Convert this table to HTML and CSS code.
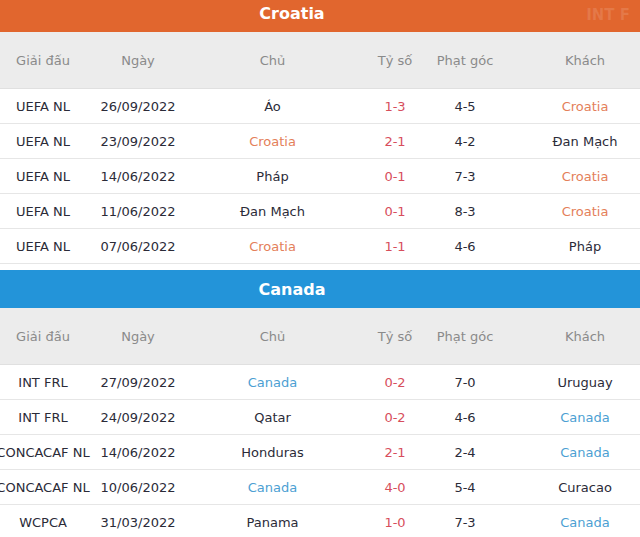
FILE: index.html
```html
<!DOCTYPE html>
<html lang="vi">
<head>
<meta charset="utf-8">
<title>Lịch sử đối đầu</title>
<link rel="stylesheet" href="styles.css">
</head>
<body>
<section class="block block-first">
  <div class="bar bar-orange"><span class="bar-title">Croatia</span><span class="ghost">INT F</span></div>
  <div class="grid head">
    <div class="c">Giải đấu</div><div class="c">Ngày</div><div class="c">Chủ</div><div class="c">Tỷ số</div><div class="c">Phạt góc</div><div class="c last">Khách</div>
  </div>
  <div class="grid row">
    <div class="c">UEFA NL</div><div class="c">26/09/2022</div><div class="c">Áo</div><div class="c score">1-3</div><div class="c">4-5</div><div class="c last hr">Croatia</div>
  </div>
  <div class="grid row">
    <div class="c">UEFA NL</div><div class="c">23/09/2022</div><div class="c hr">Croatia</div><div class="c score">2-1</div><div class="c">4-2</div><div class="c last">Đan Mạch</div>
  </div>
  <div class="grid row">
    <div class="c">UEFA NL</div><div class="c">14/06/2022</div><div class="c">Pháp</div><div class="c score">0-1</div><div class="c">7-3</div><div class="c last hr">Croatia</div>
  </div>
  <div class="grid row">
    <div class="c">UEFA NL</div><div class="c">11/06/2022</div><div class="c">Đan Mạch</div><div class="c score">0-1</div><div class="c">8-3</div><div class="c last hr">Croatia</div>
  </div>
  <div class="grid row">
    <div class="c">UEFA NL</div><div class="c">07/06/2022</div><div class="c hr">Croatia</div><div class="c score">1-1</div><div class="c">4-6</div><div class="c last">Pháp</div>
  </div>
</section>
<section class="block">
  <div class="bar bar-blue"><span class="bar-title">Canada</span></div>
  <div class="grid head">
    <div class="c">Giải đấu</div><div class="c">Ngày</div><div class="c">Chủ</div><div class="c">Tỷ số</div><div class="c">Phạt góc</div><div class="c last">Khách</div>
  </div>
  <div class="grid row">
    <div class="c">INT FRL</div><div class="c">27/09/2022</div><div class="c ca">Canada</div><div class="c score">0-2</div><div class="c">7-0</div><div class="c last">Uruguay</div>
  </div>
  <div class="grid row">
    <div class="c">INT FRL</div><div class="c">24/09/2022</div><div class="c">Qatar</div><div class="c score">0-2</div><div class="c">4-6</div><div class="c last ca">Canada</div>
  </div>
  <div class="grid row">
    <div class="c">CONCACAF NL</div><div class="c">14/06/2022</div><div class="c">Honduras</div><div class="c score">2-1</div><div class="c">2-4</div><div class="c last ca">Canada</div>
  </div>
  <div class="grid row">
    <div class="c">CONCACAF NL</div><div class="c">10/06/2022</div><div class="c ca">Canada</div><div class="c score">4-0</div><div class="c">5-4</div><div class="c last">Curacao</div>
  </div>
  <div class="grid row">
    <div class="c">WCPCA</div><div class="c">31/03/2022</div><div class="c">Panama</div><div class="c score">1-0</div><div class="c">7-3</div><div class="c last ca">Canada</div>
  </div>
</section>
</body>
</html>
```
FILE: styles.css
```css
html, body {
  margin: 0;
  padding: 0;
  background: #ffffff;
  overflow: hidden;
}
body {
  width: 640px;
  font-family: "DejaVu Sans", "Liberation Sans", sans-serif;
  font-size: 13px;
  color: #2b2b38;
}
.block-first {
  margin-top: -6px;
}
.block + .block {
  margin-top: 6px;
}
.bar {
  height: 38px;
  display: flex;
  align-items: center;
  justify-content: center;
  padding-right: 56px;
  position: relative;
}
.bar-orange { background: #e1662e; }
.bar-blue { background: #2394d9; }
.bar-title {
  color: #ffffff;
  font-weight: bold;
  font-size: 16px;
}
.ghost {
  position: absolute;
  right: 10px;
  top: 12px;
  color: rgba(255,255,255,0.12);
  font-weight: bold;
  font-size: 15px;
}
.grid {
  display: grid;
  grid-template-columns: 86px 104px 165px 80px 60px 1fr;
  border-bottom: 1px solid #e6e6e6;
}
.head {
  height: 56px;
  background: #ececec;
  color: #8a8a8a;
  border-bottom-color: #e0e0e0;
}
.row {
  height: 34px;
  background: #ffffff;
}
.c {
  display: flex;
  align-items: center;
  justify-content: center;
  white-space: nowrap;
  min-width: 0;
}
.last {
  padding-left: 35px;
}
.hr { color: #e4805a; }
.ca { color: #4c9fd3; }
.score { color: #d74e5c; }
```
